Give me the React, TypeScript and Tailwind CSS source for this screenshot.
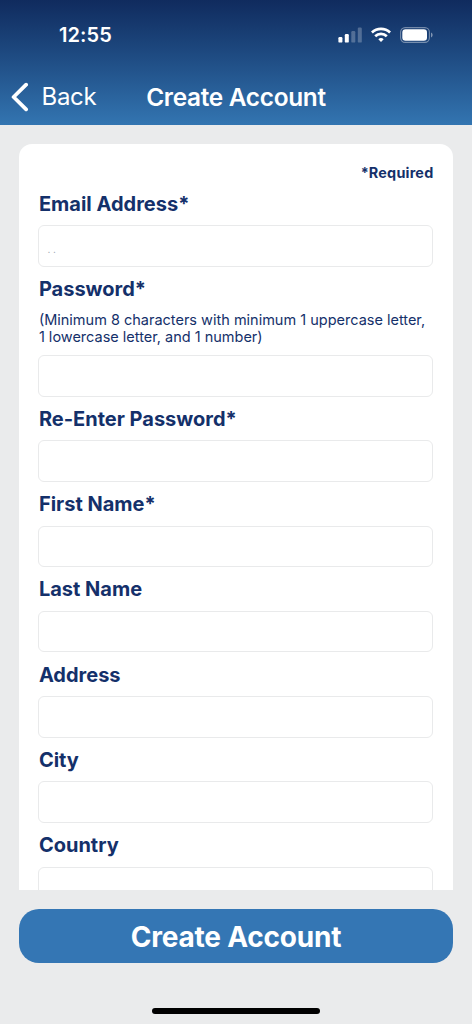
type FieldProps = {
  label: string;
  type?: string;
  hint?: string[];
  placeholder?: string;
};

const fields: FieldProps[] = [
  { label: "Email Address*", type: "email", placeholder: ". ." },
  {
    label: "Password*",
    type: "password",
    hint: [
      "(Minimum 8 characters with minimum 1 uppercase letter,",
      "1 lowercase letter, and 1 number)",
    ],
  },
  { label: "Re-Enter Password*", type: "password" },
  { label: "First Name*" },
  { label: "Last Name" },
  { label: "Address" },
  { label: "City" },
  { label: "Country" },
];

function StatusBar() {
  return (
    <div className="flex h-[70px] items-center justify-between pl-[59px] pr-[39px] text-white">
      <span className="text-[20px] font-semibold leading-none tracking-[0.1px]">12:55</span>
      <div className="flex items-center">
        <svg width="24" height="16" viewBox="0 0 24 16" fill="currentColor">
          <rect x="0.4" y="10" width="4" height="5.6" rx="1.2" />
          <rect x="6.8" y="7" width="4" height="8.6" rx="1.2" />
          <rect x="13.3" y="4" width="4" height="11.6" rx="1.2" opacity="0.25" />
          <rect x="19.8" y="0.6" width="4" height="15" rx="1.2" opacity="0.25" />
        </svg>
        <svg className="ml-[9px]" width="20" height="16" viewBox="0 0 20 16" fill="none" stroke="currentColor" strokeWidth="2.7">
          <path d="M0.9 5.5a13.1 13.1 0 0 1 18.2 0" />
          <path d="M4.2 9.2a8.3 8.3 0 0 1 11.6 0" />
          <path d="M10 15.1l-2.7-2.8a4 4 0 0 1 5.4 0z" fill="currentColor" stroke="none" />
        </svg>
        <svg className="ml-[9px]" width="33" height="16" viewBox="0 0 33 16" fill="none">
          <rect x="0.6" y="0.6" width="28.8" height="14.8" rx="4.6" stroke="currentColor" strokeOpacity="0.4" strokeWidth="1.1" />
          <rect x="2.3" y="2.3" width="24.7" height="11.4" rx="3.2" fill="currentColor" />
          <path d="M31 5.6c1 .4 1.6 1.3 1.6 2.4s-.6 2-1.6 2.4z" fill="currentColor" fillOpacity="0.45" />
        </svg>
      </div>
    </div>
  );
}

function NavBar() {
  return (
    <div className="grid h-[54px] grid-cols-[1fr_auto_1fr] items-center text-white">
      <button type="button" className="flex items-center pl-[11px] text-left">
        <svg width="18" height="30" viewBox="0 0 18 30" fill="none" stroke="currentColor" strokeWidth="3.8" strokeLinecap="round" strokeLinejoin="round">
          <path d="M15.1 2.7 2.6 15l12.5 12.3" />
        </svg>
        <span className="ml-[12.5px] text-[24px] leading-none tracking-[-0.3px]">Back</span>
      </button>
      <h1 className="text-[24.4px] font-semibold leading-none tracking-[-0.3px]">Create Account</h1>
    </div>
  );
}

function Field({ label, type = "text", hint, placeholder }: FieldProps) {
  return (
    <label className="block shrink-0 whitespace-nowrap">
      <span className="flex h-[43.7px] items-center pl-[0.5px] pt-px text-[20px] font-bold">{label}</span>
      {hint && (
        <span className="block h-[44.5px] pl-[0.5px] pt-[1px] text-[14.5px] leading-[17px]">
          {hint.map((line) => (
            <span key={line} className="block">{line}</span>
          ))}
        </span>
      )}
      <input
        type={type}
        placeholder={placeholder}
        className="block h-[41.6px] w-full rounded-[6px] border border-[#e9eaeb] bg-white px-2 pt-1.5 text-[10px] placeholder:text-gray-400"
      />
    </label>
  );
}

export default function App() {
  return (
    <div className="flex h-[1024px] w-[472px] flex-col overflow-hidden bg-[#eaebec] font-[Inter,'Liberation_Sans',sans-serif] text-[#14306a]">
      <header className="h-[125px] shrink-0 bg-gradient-to-b from-[#102b5e] to-[#3375b1]">
        <StatusBar />
        <NavBar />
      </header>

      <main className="mx-[19px] mt-[19px] flex h-[746px] shrink-0 flex-col overflow-hidden rounded-t-[13px] bg-white pl-[19.4px] pr-[19.6px] pt-[18px]">
        <p className="h-[19.5px] shrink-0 text-right text-[14.4px] font-bold leading-[21px] tracking-[0.2px]">*Required</p>
        {fields.map((field) => (
          <Field key={field.label} {...field} />
        ))}
      </main>

      <button
        type="button"
        className="mx-[19px] mt-[19px] flex h-[54px] shrink-0 items-center justify-center rounded-[20px] bg-[#3476b4] pt-px text-[28px] font-bold tracking-[-0.2px] text-white"
      >
        Create Account
      </button>

      <div className="mx-auto mt-[45px] h-[6px] w-[168px] shrink-0 rounded-full bg-black" />
    </div>
  );
}
